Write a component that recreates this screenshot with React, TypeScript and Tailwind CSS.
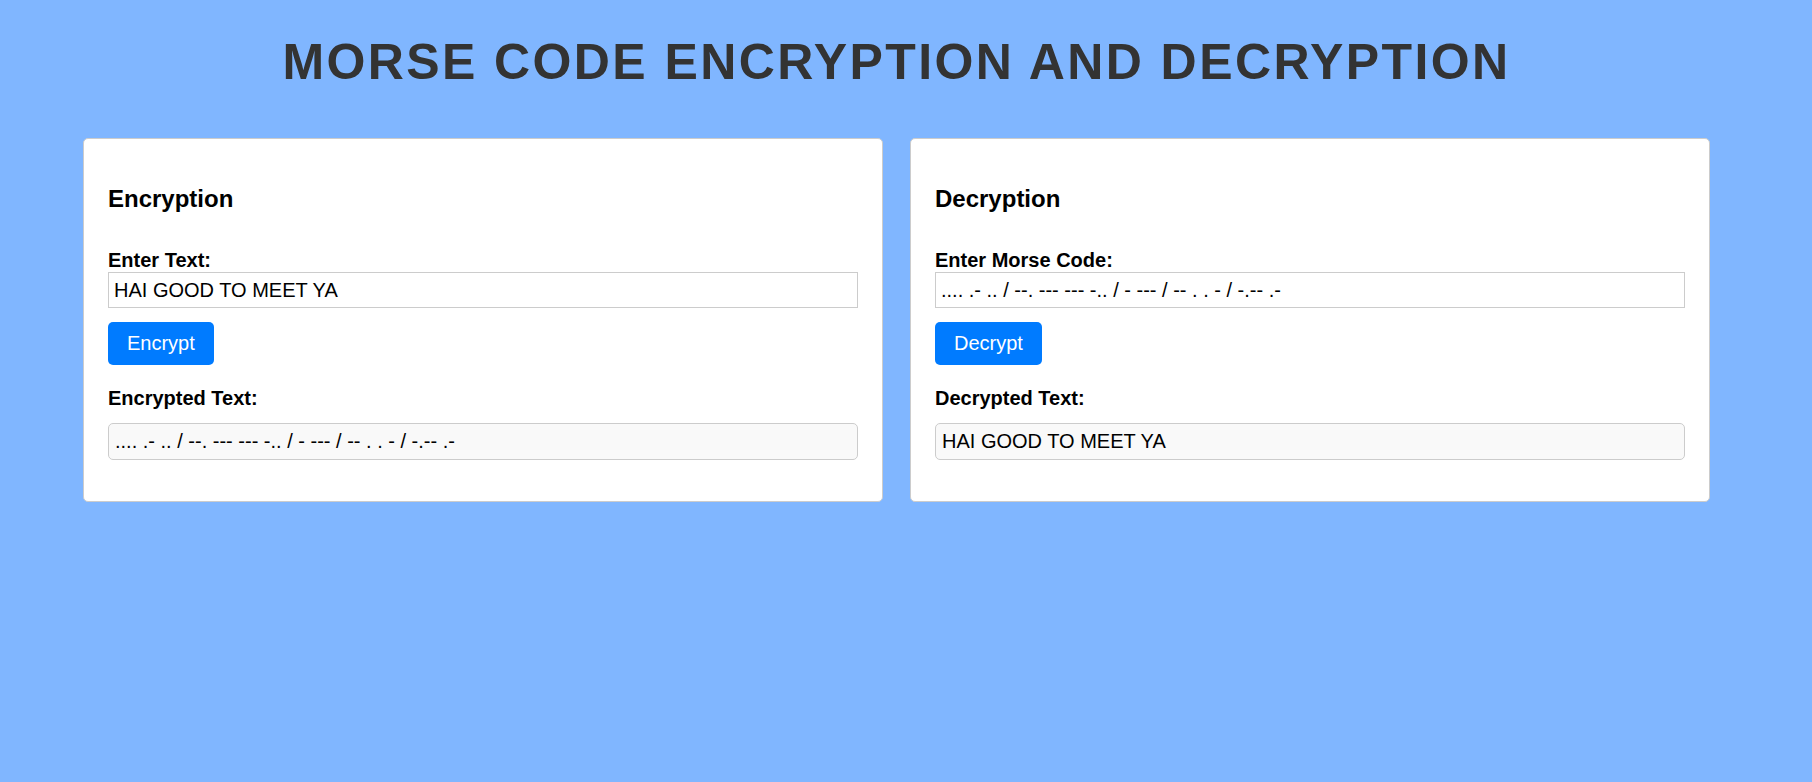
import { useState } from "react";

const MORSE: Record<string, string> = {
  A: ".-", B: "-...", C: "-.-.", D: "-..", E: ".", F: "..-.", G: "--.", H: "....",
  I: "..", J: ".---", K: "-.-", L: ".-..", M: "--", N: "-.", O: "---", P: ".--.",
  Q: "--.-", R: ".-.", S: "...", T: "-", U: "..-", V: "...-", W: ".--", X: "-..-",
  Y: "-.--", Z: "--..", "0": "-----", "1": ".----", "2": "..---", "3": "...--",
  "4": "....-", "5": ".....", "6": "-....", "7": "--...", "8": "---..", "9": "----.",
};

const REVERSE: Record<string, string> = Object.fromEntries(
  Object.entries(MORSE).map(([k, v]) => [v, k])
);

const encrypt = (text: string) =>
  text
    .toUpperCase()
    .trim()
    .split(/\s+/)
    .map((word) =>
      word
        .split("")
        .map((ch) => MORSE[ch] ?? "")
        .filter(Boolean)
        .join(" ")
    )
    .join(" / ");

const decrypt = (code: string) =>
  code
    .trim()
    .split(" / ")
    .map((word) =>
      word
        .split(" ")
        .map((sym) => REVERSE[sym] ?? "")
        .join("")
    )
    .join(" ");

type PanelProps = {
  title: string;
  inputLabel: string;
  outputLabel: string;
  buttonText: string;
  value: string;
  result: string;
  onChange: (v: string) => void;
  onRun: () => void;
};

const Panel = ({ title, inputLabel, outputLabel, buttonText, value, result, onChange, onRun }: PanelProps) => {
  return (
    <div className="w-[800px] bg-white border border-[#cccccc] rounded-[5px] px-[24px] pt-[46px] pb-[41px]">
      <h2 className="text-[24px] leading-[28px] font-bold text-black">{title}</h2>
      <label className="block mt-[36px] text-[20px] leading-[23px] font-bold text-black">{inputLabel}</label>
      <input
        className="block w-full h-[36px] border border-[#cccccc] px-[5px] text-[20px] leading-[23px] text-black outline-none"
        value={value}
        onChange={(e) => onChange(e.target.value)}
      />
      <button
        onClick={onRun}
        className="block mt-[14px] bg-[#007bff] text-white rounded-[5px] px-[19px] py-[10px] text-[20px] leading-[23px] cursor-pointer"
      >
        {buttonText}
      </button>
      <p className="mt-[22px] text-[20px] leading-[23px] font-bold text-black">{outputLabel}</p>
      <div className="mt-[13px] h-[37px] bg-[#f9f9f9] border border-[#cccccc] rounded-[5px] px-[6px] py-[6px] text-[20px] leading-[23px] text-black whitespace-pre">
        {result}
      </div>
    </div>
  );
};

export default function App() {
  const [plain, setPlain] = useState("HAI GOOD TO MEET YA");
  const [encrypted, setEncrypted] = useState(".... .- .. / --. --- --- -.. / - --- / -- . . - / -.-- .-");
  const [code, setCode] = useState(".... .- .. / --. --- --- -.. / - --- / -- . . - / -.-- .-");
  const [decrypted, setDecrypted] = useState("HAI GOOD TO MEET YA");

  return (
    <div className="min-h-screen bg-[#80b6ff] font-['Liberation_Sans',Arial,sans-serif]">
      <div className="w-[1793px]">
        <h1 className="pt-[34px] text-center text-[50px] leading-[57px] font-bold tracking-[2.4px] text-[#333333]">
          MORSE CODE ENCRYPTION AND DECRYPTION
        </h1>
        <div className="mt-[47px] flex justify-center gap-[27px]">
          <Panel
            title="Encryption"
            inputLabel="Enter Text:"
            outputLabel="Encrypted Text:"
            buttonText="Encrypt"
            value={plain}
            result={encrypted}
            onChange={setPlain}
            onRun={() => setEncrypted(encrypt(plain))}
          />
          <Panel
            title="Decryption"
            inputLabel="Enter Morse Code:"
            outputLabel="Decrypted Text:"
            buttonText="Decrypt"
            value={code}
            result={decrypted}
            onChange={setCode}
            onRun={() => setDecrypted(decrypt(code))}
          />
        </div>
      </div>
    </div>
  );
}
